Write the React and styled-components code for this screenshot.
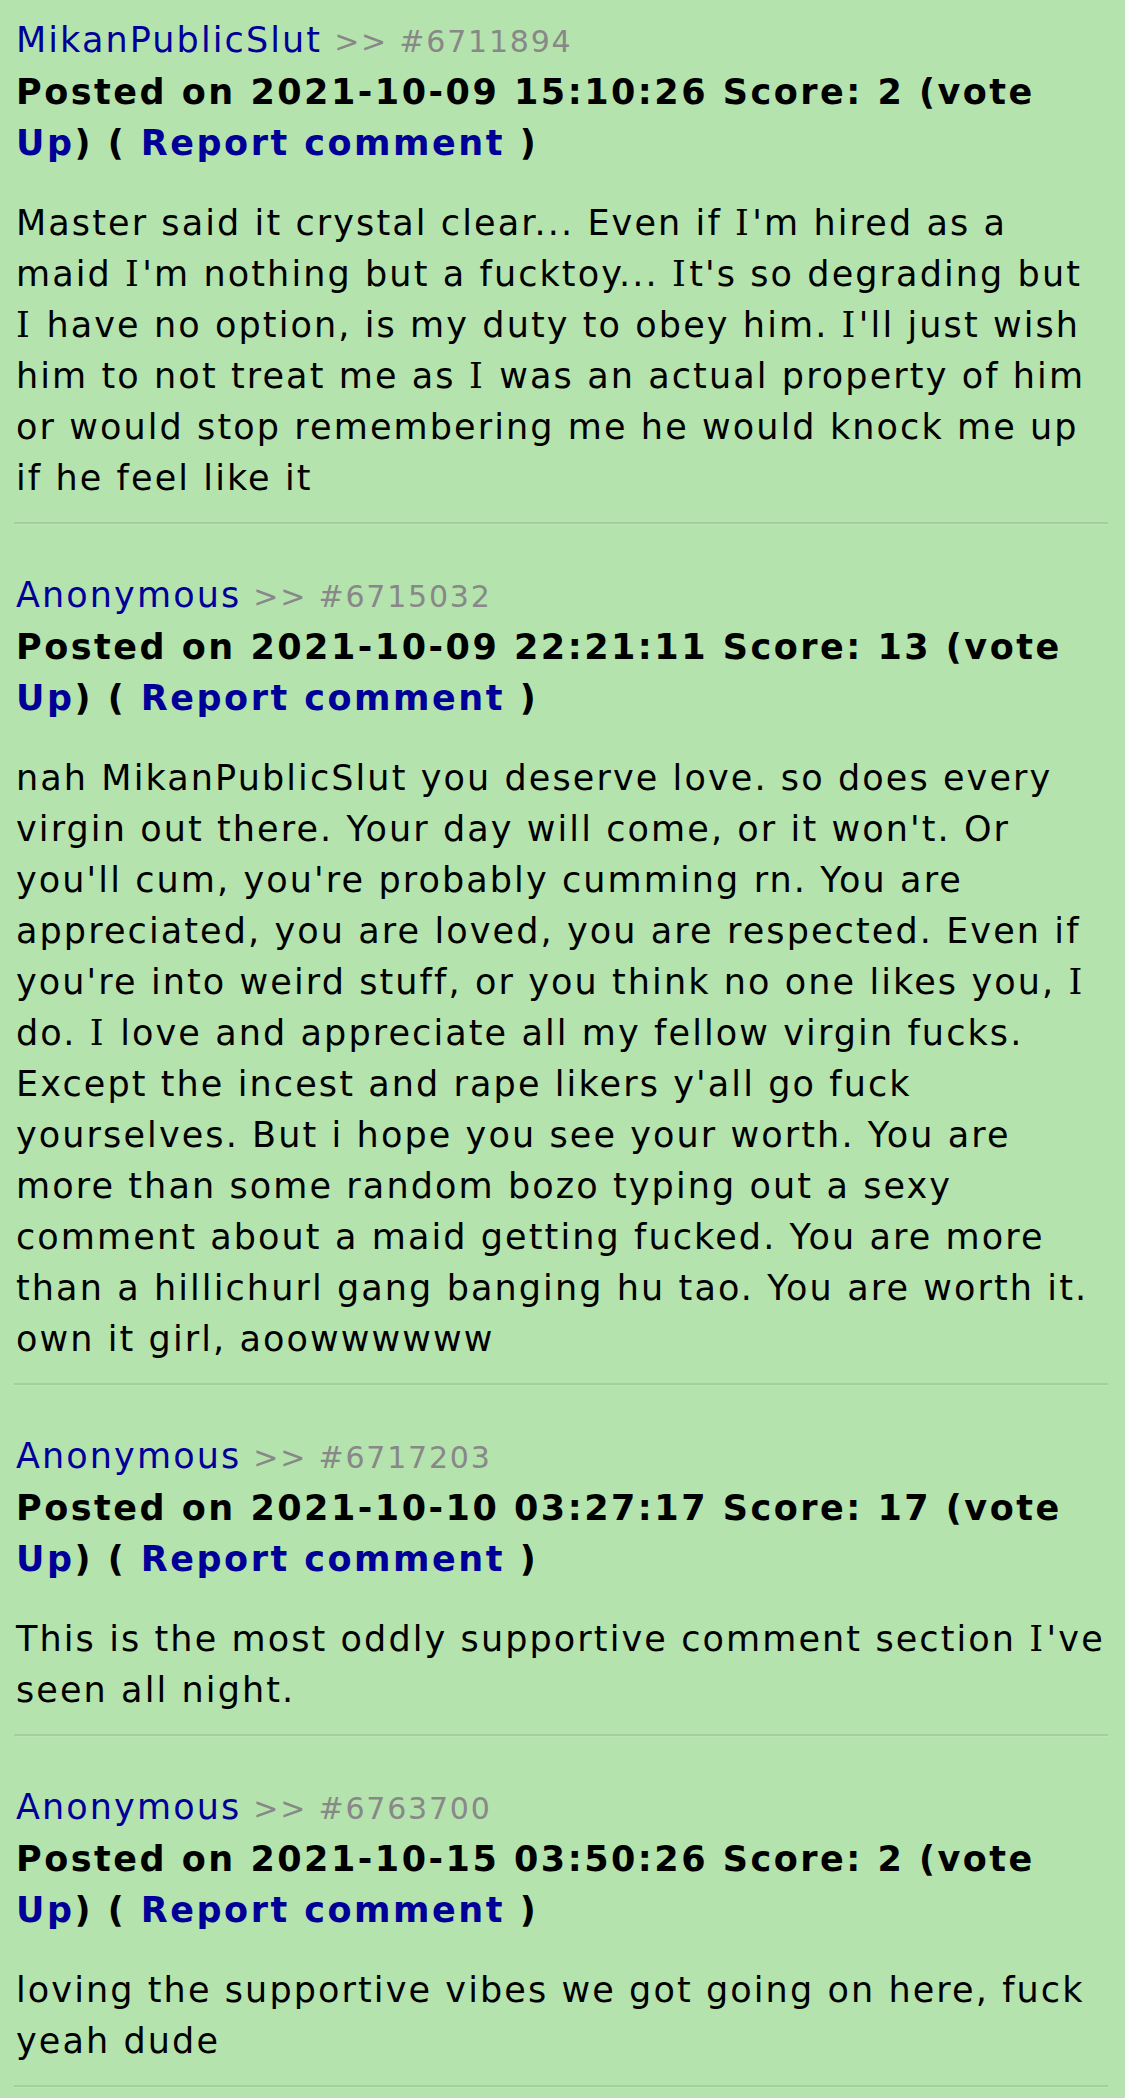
import React from "react";
import styled, { createGlobalStyle } from "styled-components";

const Global = createGlobalStyle`
  html, body { margin: 0; padding: 0; background: #b5e3ad; }
  body { font-family: "DejaVu Sans", Verdana, sans-serif; }
`;

const Page = styled.div`
  background: #b5e3ad;
  padding: 15px 17px 0 16px;
  font-size: 35px;
  line-height: 51px;
  color: #000;
`;

const Comment = styled.div`
  display: flex;
  flex-direction: column;
  & + & { margin-top: 45px; }
`;

const NameLine = styled.div`
  display: flex;
  align-items: baseline;
  gap: 12px;
`;

const Author = styled.a`
  color: #000099;
  text-decoration: none;
  letter-spacing: 2.1px;
`;

const PostId = styled.span`
  color: #888888;
  font-size: 30px;
  letter-spacing: 1.8px;
`;

const Meta = styled.div`
  font-weight: bold;
  letter-spacing: 2.5px;
`;

const BlueLink = styled.a`
  color: #000099;
  text-decoration: none;
`;

const Body = styled.div`
  margin-top: 29px;
  letter-spacing: 2.1px;
`;

/* Verdana's capital I carries slab serifs and is wider than DejaVu's */
const SlabI = styled.span`
  font-family: "DejaVu Serif", "DejaVu Sans", serif;
  font-size: 35px;
  line-height: 51px;
  letter-spacing: 3.4px;
`;

const Divider = styled.hr`
  margin: 18px 0 0 -2px;
  border: 0;
  border-top: 2px solid #a2cf9b;
  border-bottom: 1px solid #bde6b6;
  height: 0;
`;

const withSlabI = (text) =>
  text.split(/(I)/).map((part, i) =>
    part === "I" ? <SlabI key={i}>I</SlabI> : <React.Fragment key={i}>{part}</React.Fragment>
  );

const comments = [
  {
    author: "MikanPublicSlut",
    id: "6711894",
    date: "2021-10-09 15:10:26",
    score: 2,
    text: "Master said it crystal clear... Even if I'm hired as a maid I'm nothing but a fucktoy... It's so degrading but I have no option, is my duty to obey him. I'll just wish him to not treat me as I was an actual property of him or would stop remembering me he would knock me up if he feel like it",
  },
  {
    author: "Anonymous",
    id: "6715032",
    date: "2021-10-09 22:21:11",
    score: 13,
    text: "nah MikanPublicSlut you deserve love. so does every virgin out there. Your day will come, or it won't. Or you'll cum, you're probably cumming rn. You are appreciated, you are loved, you are respected. Even if you're into weird stuff, or you think no one likes you, I do. I love and appreciate all my fellow virgin fucks. Except the incest and rape likers y'all go fuck yourselves. But i hope you see your worth. You are more than some random bozo typing out a sexy comment about a maid getting fucked. You are more than a hillichurl gang banging hu tao. You are worth it. own it girl, aoowwwwww",
  },
  {
    author: "Anonymous",
    id: "6717203",
    date: "2021-10-10 03:27:17",
    score: 17,
    text: "This is the most oddly supportive comment section I've seen all night.",
  },
  {
    author: "Anonymous",
    id: "6763700",
    date: "2021-10-15 03:50:26",
    score: 2,
    text: "loving the supportive vibes we got going on here, fuck yeah dude",
  },
];

export default function App() {
  return (
    <>
      <Global />
      <Page>
        {comments.map((c) => (
          <Comment key={c.id}>
            <NameLine>
              <Author href="#">{c.author}</Author>
              <PostId>&gt;&gt; #{c.id}</PostId>
            </NameLine>
            <Meta>
              Posted on {c.date} Score: {c.score} (vote <BlueLink href="#">Up</BlueLink>) ({" "}
              <BlueLink href="#">Report comment</BlueLink> )
            </Meta>
            <Body>{withSlabI(c.text)}</Body>
            <Divider />
          </Comment>
        ))}
      </Page>
    </>
  );
}
